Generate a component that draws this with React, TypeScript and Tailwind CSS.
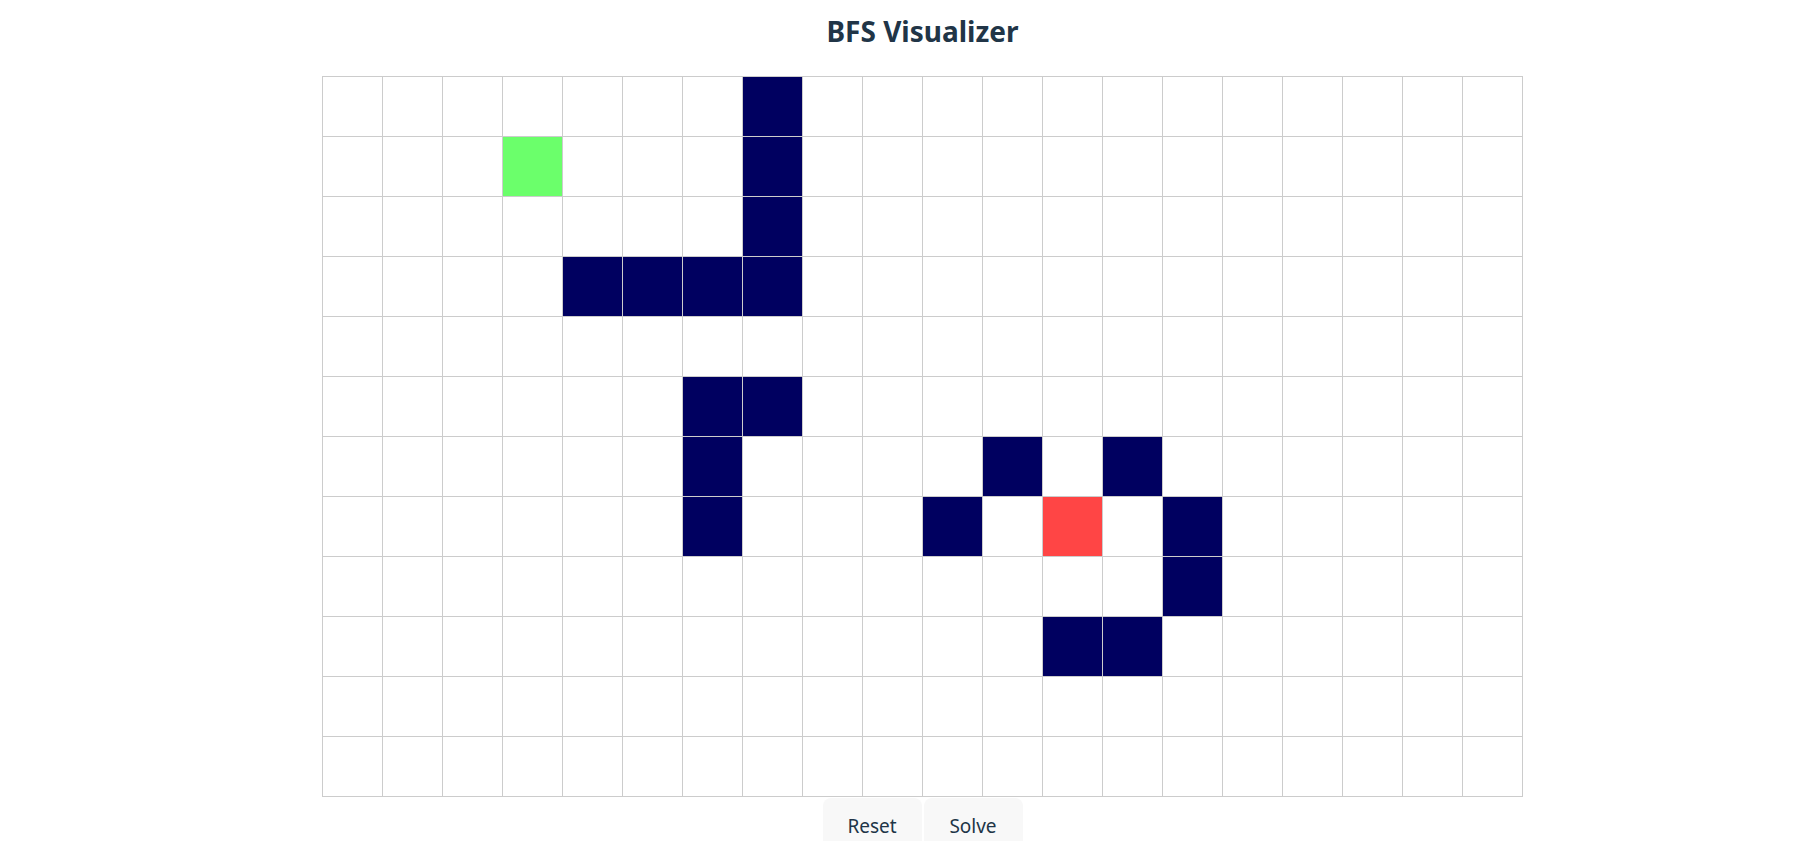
import React from "react";

const ROWS = 12;
const COLS = 20;

const walls = new Set<string>([
  "0,7", "1,7", "2,7", "3,7",
  "3,4", "3,5", "3,6",
  "5,6", "5,7",
  "6,6", "6,11", "6,13",
  "7,6", "7,10", "7,14",
  "8,14",
  "9,12", "9,13",
]);

function cellClass(r: number, c: number): string {
  if (r === 1 && c === 3) return "bg-[#6bff6b]";
  if (r === 7 && c === 12) return "bg-[#ff4545]";
  if (walls.has(`${r},${c}`)) return "bg-[#000060]";
  return "bg-white";
}

export default function App() {
  const cells: React.ReactNode[] = [];
  for (let r = 0; r < ROWS; r++) {
    for (let c = 0; c < COLS; c++) {
      cells.push(
        <div
          key={`${r}-${c}`}
          className={`box-border h-[60px] w-[60px] border-b border-r border-[#cccccc] ${cellClass(r, c)}`}
        />
      );
    }
  }
  return (
    <div
      className="flex min-h-[841px] w-full flex-col items-center bg-white pl-[47px] text-[#213547]"
      style={{ fontFamily: '"Noto Sans", "Open Sans", sans-serif' }}
    >
      <h1 className="mt-[14px] mb-[28px] text-[28px] leading-[34px] font-bold">BFS Visualizer</h1>
      <div className="box-content grid grid-cols-[repeat(20,60px)] border-l border-t border-[#cccccc]">
        {cells}
      </div>
      <div className="mt-[1px] flex gap-[2px]">
        <button className="h-[56px] w-[99px] rounded-lg bg-[#f8f8f8] text-[19px] font-normal text-[#213547]">
          Reset
        </button>
        <button className="h-[56px] w-[99px] rounded-lg bg-[#f8f8f8] text-[19px] font-normal text-[#213547]">
          Solve
        </button>
      </div>
    </div>
  );
}
